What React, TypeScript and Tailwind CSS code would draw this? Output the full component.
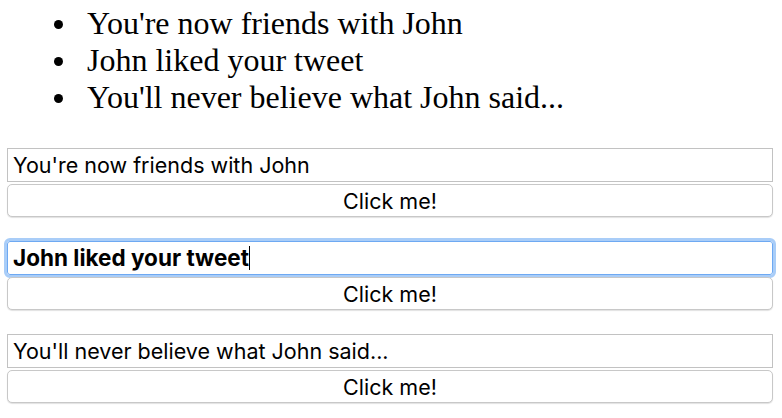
import { useState } from "react";

const notifications = [
  "You're now friends with John",
  "John liked your tweet",
  "You'll never believe what John said...",
];

const sans = "font-['Inter','Liberation_Sans',sans-serif]";

function Field({ text, focused }: { text: string; focused?: boolean }) {
  if (focused) {
    return (
      <div
        className={`ml-[7px] w-[766px] h-[34px] flex items-center pl-[5px] bg-white border border-[#6ea9f2] rounded-[3px] outline outline-[3px] outline-[#a9cdf8] text-[22.5px] font-bold text-black ${sans}`}
      >
        <span>{text}</span>
        <span className="inline-block w-px h-[24px] bg-black" />
      </div>
    );
  }
  return (
    <input
      readOnly
      value={text}
      className={`block ml-[7px] w-[766px] h-[34px] pl-[5px] bg-white border border-[#c2c2c2] text-[21.5px] text-black outline-none ${sans}`}
    />
  );
}

export default function App() {
  const [clicks, setClicks] = useState(0);

  return (
    <div className="w-[782px] h-[418px] bg-white overflow-hidden">
      <ul className="mt-[5px] font-['Liberation_Serif',serif] text-[32px] leading-[37px] text-black">
        {notifications.map((n) => (
          <li key={n} className="flex items-start">
            <span className="ml-[54px] mr-[24px] mt-[15px] w-[9px] h-[9px] rounded-full bg-black shrink-0" />
            <span>{n}</span>
          </li>
        ))}
      </ul>

      <div className="mt-[32px] flex flex-col gap-[24px]">
        {notifications.map((n, i) => (
          <div key={n} className="flex flex-col gap-[2px]">
            <Field text={n} focused={i === 1} />
            <button
              onClick={() => setClicks(clicks + 1)}
              className={`ml-[7px] w-[766px] h-[33px] bg-white border border-[#c8c8c8] rounded-[5px] shadow-[0_1px_1px_rgba(0,0,0,0.12)] text-[21.5px] text-black ${sans}`}
            >
              Click me!
            </button>
          </div>
        ))}
      </div>
    </div>
  );
}
